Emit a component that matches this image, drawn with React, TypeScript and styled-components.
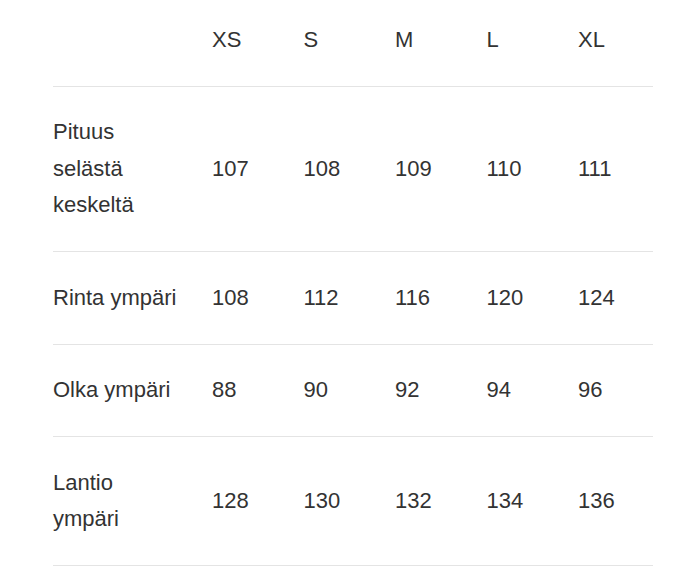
import React from 'react'
import styled, { createGlobalStyle } from 'styled-components'

const GlobalStyle = createGlobalStyle`
    html, body {
        margin: 0;
        padding: 0;
        background: #ffffff;
    }
    body {
        font-family: "Liberation Sans", Arial, sans-serif;
        color: #333333;
    }
`

interface SizeRow {
    label: string,
    values: number[],
}

const sizes = ['XS', 'S', 'M', 'L', 'XL']

const rows: SizeRow[] = [
    { label: 'Pituus selästä keskeltä', values: [107, 108, 109, 110, 111] },
    { label: 'Rinta ympäri', values: [108, 112, 116, 120, 124] },
    { label: 'Olka ympäri', values: [88, 90, 92, 94, 96] },
    { label: 'Lantio ympäri', values: [128, 130, 132, 134, 136] },
]

const SizeTable: React.FC = () => {
    return (
        <Page>
            <Table>
                <Row $header>
                    <LabelCell />
                    {sizes.map(size => (
                        <Cell key={size}>{size}</Cell>
                    ))}
                </Row>
                {rows.map(row => (
                    <Row key={row.label}>
                        <LabelCell>{row.label}</LabelCell>
                        {row.values.map((val, index) => (
                            <Cell key={index}>{val}</Cell>
                        ))}
                    </Row>
                ))}
            </Table>
        </Page>
    )
}

export default function App() {
    return (
        <>
            <GlobalStyle />
            <SizeTable />
        </>
    )
}

const Page = styled.div`
    padding: 0 25px 0 53px;
    width: 678px;
    box-sizing: border-box;
`

const Table = styled.div`
    display: flex;
    flex-direction: column;
    width: 600px;
`

const Row = styled.div<{ $header?: boolean }>`
    display: grid;
    grid-template-columns: 159px repeat(4, 91.5px) 1fr;
    align-items: center;
    padding: ${props => props.$header ? '22px 0 27px' : '27.5px 0'};
    border-bottom: 1px solid #e4e4e4;
    font-size: 22px;
    line-height: 36.5px;
`

const LabelCell = styled.div`
    padding-right: 30px;
`

const Cell = styled.div`
    white-space: nowrap;
`
